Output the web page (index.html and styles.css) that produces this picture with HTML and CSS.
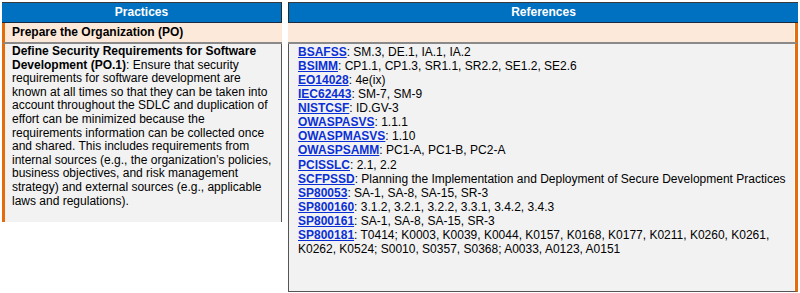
FILE: index.html
```html
<!DOCTYPE html>
<html>
<head>
<meta charset="utf-8">
<link rel="stylesheet" href="styles.css">
</head>
<body>
<div class="table">
  <div class="col col-left">
    <div class="head head-left">Practices</div>
    <div class="group group-left">Prepare the Organization (PO)</div>
    <div class="cell cell-left">
      <p class="practice"><b>Define Security Requirements for Software Development (PO.1)</b>: Ensure that security requirements for software development are known at all times so that they can be taken into account throughout the SDLC and duplication of effort can be minimized because the requirements information can be collected once and shared. This includes requirements from internal sources (e.g., the organization’s policies, business objectives, and risk management strategy) and external sources (e.g., applicable laws and regulations).</p>
    </div>
  </div>
  <div class="col col-right">
    <div class="head head-right">References</div>
    <div class="group group-right"></div>
    <div class="cell cell-right">
      <p class="ref"><a href="#">BSAFSS</a>: SM.3, DE.1, IA.1, IA.2</p>
      <p class="ref"><a href="#">BSIMM</a>: CP1.1, CP1.3, SR1.1, SR2.2, SE1.2, SE2.6</p>
      <p class="ref"><a href="#">EO14028</a>: 4e(ix)</p>
      <p class="ref"><a href="#">IEC62443</a>: SM-7, SM-9</p>
      <p class="ref"><a href="#">NISTCSF</a>: ID.GV-3</p>
      <p class="ref"><a href="#">OWASPASVS</a>: 1.1.1</p>
      <p class="ref"><a href="#">OWASPMASVS</a>: 1.10</p>
      <p class="ref"><a href="#">OWASPSAMM</a>: PC1-A, PC1-B, PC2-A</p>
      <p class="ref"><a href="#">PCISSLC</a>: 2.1, 2.2</p>
      <p class="ref"><a href="#">SCFPSSD</a>: Planning the Implementation and Deployment of Secure Development Practices</p>
      <p class="ref"><a href="#">SP80053</a>: SA-1, SA-8, SA-15, SR-3</p>
      <p class="ref"><a href="#">SP800160</a>: 3.1.2, 3.2.1, 3.2.2, 3.3.1, 3.4.2, 3.4.3</p>
      <p class="ref"><a href="#">SP800161</a>: SA-1, SA-8, SA-15, SR-3</p>
      <p class="ref"><a href="#">SP800181</a>: T0414; K0003, K0039, K0044, K0157, K0168, K0177, K0211, K0260, K0261, K0262, K0524; S0010, S0357, S0368; A0033, A0123, A0151</p>
    </div>
  </div>
</div>
</body>
</html>
```
FILE: styles.css
```css
html, body {
  margin: 0;
  padding: 0;
  background: #ffffff;
}
body {
  font-family: "Liberation Sans", Arial, sans-serif;
  color: #000;
}
.table {
  display: flex;
  align-items: flex-start;
  gap: 6px;
  padding: 2px 2px 0 2px;
  width: 796px;
}
.col {
  display: flex;
  flex-direction: column;
}
.col-left {
  width: 280px;
}
.col-right {
  width: 510px;
}
.head {
  background: #0070c0;
  color: #ffffff;
  font-weight: bold;
  font-size: 12px;
  text-align: center;
  height: 19px;
  line-height: 19px;
  border-top: 1px solid #3a3a3a;
  border-bottom: 1px solid #1a2a40;
}
.head-left {
  border-right: 1px solid #2a2a2a;
}
.head-right {
  border-left: 1px solid #2a2a2a;
}
.group {
  background: #fde9d9;
  height: 19px;
  line-height: 19px;
  font-weight: bold;
  font-size: 12px;
  border-bottom: 2px solid #8a8a8a;
}
.group-left {
  border-left: 3px solid #e46c0a;
  padding-left: 7px;
}
.group-right {
  border-right: 3px solid #e46c0a;
  box-shadow: inset -1px 0 0 #ffffff;
}
.cell {
  background: #f2f2f2;
  font-size: 12px;
}
.cell-left {
  border-left: 3px solid #e46c0a;
  border-right: 1px solid #555555;
  padding: 1px 5px 14px 7px;
  line-height: 13.6px;
}
.cell-right {
  border-left: 1px solid #555555;
  border-right: 3px solid #e46c0a;
  border-bottom: 1px solid #555555;
  box-shadow: inset -1px 0 0 #ffffff;
  padding: 1px 4px 35px 9px;
  line-height: 14.07px;
}
.practice {
  margin: 0;
}
.ref {
  margin: 0;
}
.ref a {
  color: #0a2fd6;
  font-weight: bold;
  text-decoration: underline;
}
```
